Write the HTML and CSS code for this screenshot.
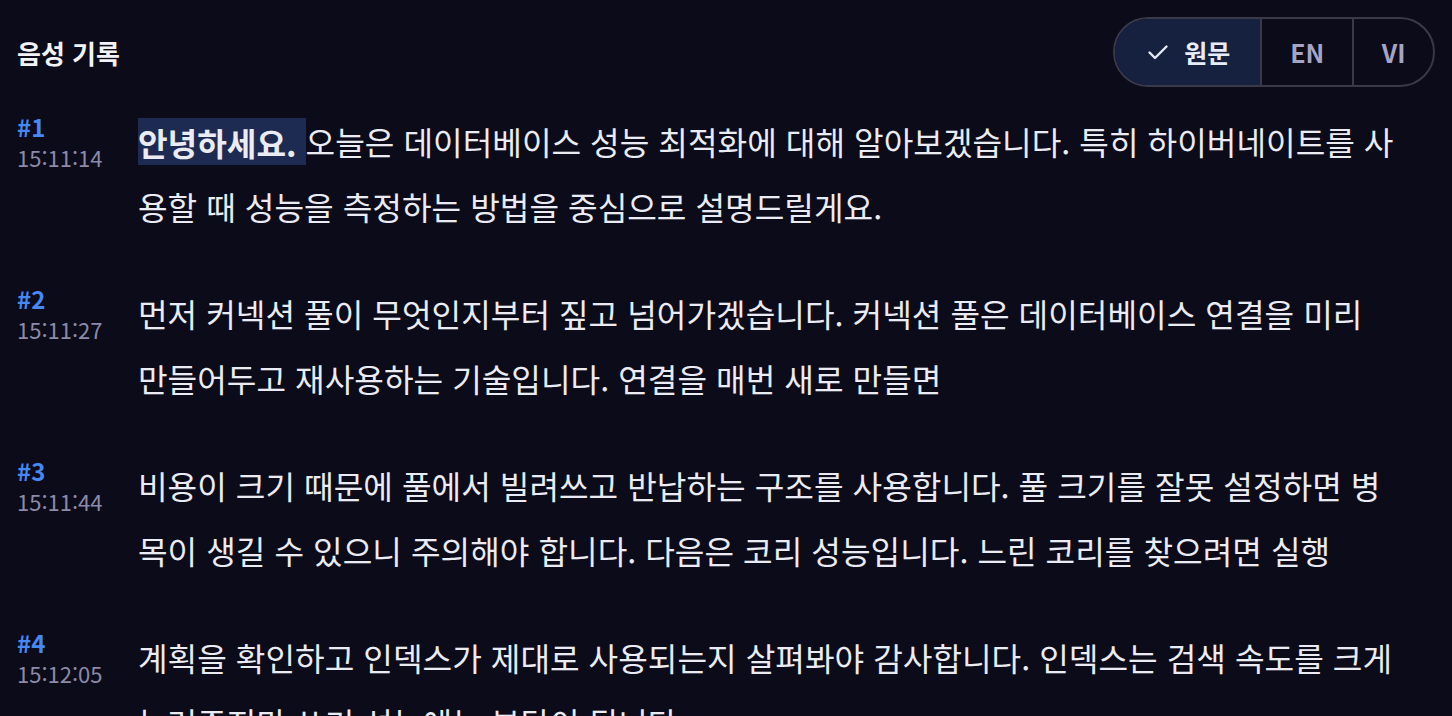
FILE: index.html
```html
<!DOCTYPE html>
<html lang="ko">
<head>
<meta charset="utf-8">
<title>음성 기록</title>
<link rel="stylesheet" href="styles.css">
</head>
<body>
<div class="app">
  <header class="header">
    <h1 class="title">음성 기록</h1>
    <div class="toggle">
      <button class="seg active">
        <svg class="check" width="24" height="24" viewBox="0 0 24 24"><polyline points="3.5,12.5 9,18 20.5,6.5" fill="none" stroke="currentColor" stroke-width="2.4" stroke-linecap="round" stroke-linejoin="round"/></svg>
        <span>원문</span>
      </button>
      <button class="seg">EN</button>
      <button class="seg">VI</button>
    </div>
  </header>
  <main class="list">
    <section class="entry">
      <div class="meta"><div class="num">#1</div><div class="time">15:11:14</div></div>
      <p class="text"><span class="hl">안녕하세요. </span>오늘은 데이터베이스 성능 최적화에 대해 알아보겠습니다. 특히 하이버네이트를 사용할 때 성능을 측정하는 방법을 중심으로 설명드릴게요.</p>
    </section>
    <section class="entry">
      <div class="meta"><div class="num">#2</div><div class="time">15:11:27</div></div>
      <p class="text">먼저 커넥션 풀이 무엇인지부터 짚고 넘어가겠습니다. 커넥션 풀은 데이터베이스 연결을 미리 만들어두고 재사용하는 기술입니다. 연결을 매번 새로 만들면</p>
    </section>
    <section class="entry">
      <div class="meta"><div class="num">#3</div><div class="time">15:11:44</div></div>
      <p class="text">비용이 크기 때문에 풀에서 빌려쓰고 반납하는 구조를 사용합니다. 풀 크기를 잘못 설정하면 병목이 생길 수 있으니 주의해야 합니다. 다음은 코리 성능입니다. 느린 코리를 찾으려면 실행</p>
    </section>
    <section class="entry">
      <div class="meta"><div class="num">#4</div><div class="time">15:12:05</div></div>
      <p class="text">계획을 확인하고 인덱스가 제대로 사용되는지 살펴봐야 감사합니다. 인덱스는 검색 속도를 크게 늘려주지만 쓰기 성능에는 부담이 됩니다.</p>
    </section>
  </main>
</div>
</body>
</html>
```
FILE: styles.css
```css
* { box-sizing: border-box; }
html, body {
  margin: 0;
  padding: 0;
  background: #0b0b1a;
  height: 100%;
  overflow: hidden;
}
body {
  font-family: "Noto Sans CJK KR", "Noto Sans", sans-serif;
  color: #ebebf3;
}
.app {
  padding: 17px 17px 0 17px;
}
.header {
  display: flex;
  align-items: center;
  justify-content: space-between;
  height: 70px;
}
.title {
  margin: 0;
  font-size: 26px;
  font-weight: 700;
  color: #f2f2f7;
  line-height: 1;
  padding-top: 2px;
}
.toggle {
  display: flex;
  height: 70px;
  border: 2px solid #393948;
  border-radius: 35px;
  overflow: hidden;
}
.seg {
  display: flex;
  align-items: center;
  gap: 14px;
  padding: 0 28px;
  border: 0;
  border-left: 2px solid #393948;
  background: transparent;
  font-family: inherit;
  font-size: 25px;
  font-weight: 700;
  color: #a7a4c3;
  line-height: 1;
}
.seg:first-child { border-left: 0; }
.seg:last-child { padding: 0 27.5px; }
.seg.active {
  background: #16213f;
  color: #e8ecf8;
  padding: 0 30px 0 31px;
}
.check { display: block; color: #e6e9f5; }
.list {
  display: flex;
  flex-direction: column;
  gap: 42px;
  margin-top: 22px;
  padding-right: 38px;
}
.entry {
  display: grid;
  grid-template-columns: 121px 1fr;
}
.meta {
  padding-top: 2px;
}
.num {
  font-size: 24px;
  font-weight: 700;
  color: #4688f5;
  line-height: 31px;
}
.time {
  font-size: 22px;
  color: #8c8aa8;
  line-height: 31px;
}
.text {
  margin: 0;
  font-size: 32.2px;
  line-height: 65px;
  color: #ebebf3;
}
.hl {
  background: #1d2b52;
  font-weight: 700;
  padding: 0.5px 0;
}
```
